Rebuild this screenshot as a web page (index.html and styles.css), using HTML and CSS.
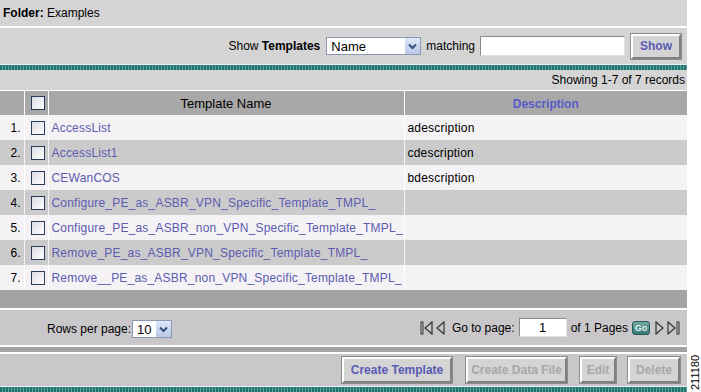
FILE: index.html
```html
<!doctype html>
<html lang="en">
<head>
<meta charset="utf-8">
<title>Templates</title>
<link rel="stylesheet" href="styles.css">
</head>
<body>
<div class="page">

  <!-- folder heading -->
  <div class="folder"><b>Folder:</b> Examples</div>

  <!-- filter -->
  <div class="filter">
    <span>Show <b>Templates</b></span>
    <span class="select name">Name<span class="drop"><svg width="9" height="7" viewBox="0 0 9 7"><path d="M1 1.5 L4.5 5 L8 1.5" fill="none" stroke="#33507a" stroke-width="2"/></svg></span></span>
    <span>matching</span>
    <span class="field match"></span>
    <span class="btn show">Show</span>
  </div>

  <div class="stripe"></div>

  <div class="count">Showing 1-7 of 7 records</div>

  <table class="grid">
    <colgroup>
      <col class="c-num">
      <col class="c-chk">
      <col class="c-name">
      <col>
    </colgroup>
    <tr class="head">
      <th class="num"></th>
      <th class="chk"><span class="cb"></span></th>
      <th class="name">Template Name</th>
      <th class="desc"><a>Description</a></th>
    </tr>
    <tr class="light"><td class="num">1.</td><td class="chk"><span class="cb"></span></td><td><a>AccessList</a></td><td>adescription</td></tr>
    <tr class="dark"><td class="num">2.</td><td class="chk"><span class="cb"></span></td><td><a>AccessList1</a></td><td>cdescription</td></tr>
    <tr class="light"><td class="num">3.</td><td class="chk"><span class="cb"></span></td><td><a>CEWanCOS</a></td><td>bdescription</td></tr>
    <tr class="dark"><td class="num">4.</td><td class="chk"><span class="cb"></span></td><td><a>Configure_PE_as_ASBR_VPN_Specific_Template_TMPL_</a></td><td></td></tr>
    <tr class="light"><td class="num">5.</td><td class="chk"><span class="cb"></span></td><td><a>Configure_PE_as_ASBR_non_VPN_Specific_Template_TMPL_</a></td><td></td></tr>
    <tr class="dark"><td class="num">6.</td><td class="chk"><span class="cb"></span></td><td><a>Remove_PE_as_ASBR_VPN_Specific_Template_TMPL_</a></td><td></td></tr>
    <tr class="light"><td class="num">7.</td><td class="chk"><span class="cb"></span></td><td><a>Remove__PE_as_ASBR_non_VPN_Specific_Template_TMPL_</a></td><td></td></tr>
  </table>

  <div class="tail"></div>

  <!-- paging -->
  <div class="pager">
    <div class="rows">Rows per page:<span class="select small">10<span class="drop"><svg width="9" height="7" viewBox="0 0 9 7"><path d="M1 1.5 L4.5 5 L8 1.5" fill="none" stroke="#33507a" stroke-width="2"/></svg></span></span></div>
    <div class="goto">
      <svg width="26" height="14" viewBox="0 0 26 14">
        <rect x="1" y="1" width="2" height="12" fill="none" stroke="#333" stroke-width="1"/>
        <path d="M12 1 L5 7 L12 13 Z" fill="none" stroke="#333" stroke-width="1.2"/>
        <path d="M24 1 L17 7 L24 13 Z" fill="none" stroke="#333" stroke-width="1.2"/>
      </svg>
      <span>Go to page:</span>
      <span class="field page">1</span>
      <span>of 1 Pages</span>
      <span class="go">Go</span>
      <svg width="28" height="14" viewBox="0 0 28 14">
        <path d="M2 1 L9 7 L2 13 Z" fill="none" stroke="#333" stroke-width="1.2"/>
        <path d="M14 1 L21 7 L14 13 Z" fill="none" stroke="#333" stroke-width="1.2"/>
        <rect x="23" y="1" width="2" height="12" fill="none" stroke="#333" stroke-width="1"/>
      </svg>
    </div>
  </div>

  <div class="sep"></div>

  <!-- buttons -->
  <div class="actions">
    <span class="btn create">Create Template</span>
    <span class="btn off datafile">Create Data File</span>
    <span class="btn off edit">Edit</span>
    <span class="btn off delete">Delete</span>
  </div>

  <div class="stripe"></div>
</div>
<div class="figno">211180</div>
</body>
</html>
```

FILE: styles.css
```css
body {
  margin: 0;
  display: flex;
  font-family: "Liberation Sans", Arial, sans-serif;
  font-size: 12px;
  color: #000;
  background: #fff;
}
.page {
  width: 688px;
}
b {
  font-weight: bold;
}

.folder {
  height: 26px;
  line-height: 27px;
  padding-left: 3px;
  background-color: #d4d4d4;
  margin-bottom: 2px;
}

.filter {
  height: 36px;
  background-color: #d4d4d4;
  display: flex;
  align-items: center;
  justify-content: flex-end;
  gap: 5px;
  padding-right: 6px;
}
.filter .name {
  margin-left: 1px;
}

.select {
  display: inline-flex;
  align-items: center;
  justify-content: space-between;
  height: 18px;
  box-sizing: border-box;
  border: 1px solid #8a99b0;
  background-color: #fff;
  padding-left: 4px;
  font-size: 13px;
}
.select.name {
  width: 95px;
}
.select.small {
  width: 40px;
  margin-left: 1px;
}
.select .drop {
  width: 15px;
  height: 16px;
  display: flex;
  align-items: center;
  justify-content: center;
  background: linear-gradient(#dfe8f8, #b8c8e8);
}

.field {
  display: inline-block;
  height: 20px;
  box-sizing: border-box;
  border: 1px solid #8a8a8a;
  border-right-color: #e0e0e0;
  border-bottom-color: #e0e0e0;
  background-color: #fff;
}
.field.match {
  width: 145px;
}

.btn {
  display: inline-flex;
  align-items: center;
  justify-content: center;
  flex-shrink: 0;
  box-sizing: border-box;
  height: 26px;
  border: 2px solid #fff;
  border-right-color: #808080;
  border-bottom-color: #808080;
  outline: 1px solid #8c8c8c;
  background-color: #d4d4d4;
  color: #5a5ab4;
  font-weight: bold;
}
.btn.show {
  width: 50px;
  height: 25px;
  margin-left: 1px;
}

.stripe {
  height: 5px;
  border-top: 1px solid #e8f0f0;
  background: repeating-linear-gradient(90deg, #1f7470 0 2px, #5fa39f 2px 3px);
}

.count {
  height: 20px;
  line-height: 20px;
  text-align: right;
  padding-right: 2px;
  background-color: #d4d4d4;
}

.grid {
  width: 100%;
  table-layout: fixed;
  border-collapse: collapse;
  border-top: 1px solid #fff;
}
.c-num {
  width: 24px;
}
.c-chk {
  width: 24px;
}
.c-name {
  width: 356px;
}
.grid th,
.grid td {
  height: 25px;
  padding: 0 3px;
  border-left: 1px solid #fff;
  white-space: nowrap;
  overflow: hidden;
}
.grid td {
  letter-spacing: 0.2px;
}
.grid th:first-child,
.grid td:first-child {
  border-left: none;
}
.grid .head th {
  height: 24px;
  background-color: #a8a8a8;
  font-weight: normal;
  font-size: 13px;
}
.grid .head .desc a {
  color: #5a5ac8;
  font-weight: bold;
  font-size: 12px;
}
.grid .num {
  text-align: right;
  padding-right: 3px;
  letter-spacing: 0;
}
.grid .chk {
  padding: 0 0 0 6px;
}
.grid td a {
  color: #5c5cb0;
}
.light td {
  background-color: #f4f2f4;
}
.dark td {
  background-color: #cccbcc;
  border-left-color: #f4f2f4;
}

.cb {
  display: block;
  width: 14px;
  height: 14px;
  box-sizing: border-box;
  border: 1px solid #2a3a5a;
  background: linear-gradient(135deg, #dcdce4, #ffffff);
}

.tail {
  height: 18px;
  background-color: #a3a3a3;
  border-bottom: 2px solid #fff;
}

.pager {
  height: 35px;
  background-color: #c9c7c9;
  display: flex;
  align-items: center;
  justify-content: space-between;
  padding: 0 5px 0 47px;
}
.rows {
  display: flex;
  align-items: center;
  padding-top: 3px;
}
.goto {
  display: flex;
  align-items: center;
  gap: 4px;
}
.goto svg:first-child {
  margin-right: 2px;
}
.field.page {
  width: 48px;
  height: 19px;
  text-align: center;
  line-height: 17px;
  font-size: 13px;
}
.go {
  width: 18px;
  height: 14px;
  box-sizing: border-box;
  border: 1px solid #2a5a58;
  border-radius: 3px;
  background: linear-gradient(#6fa8a4, #3a7a76);
  color: #dff0ee;
  font-size: 9px;
  font-weight: bold;
  text-align: center;
  line-height: 12px;
}

.sep {
  height: 5px;
  border-top: 2px solid #fff;
  border-bottom: 2px solid #fff;
  background-color: #a3a3a3;
}

.actions {
  height: 32px;
  background-color: #c9c7c9;
  display: flex;
  align-items: center;
  justify-content: flex-end;
  padding-right: 7px;
}
.btn.create {
  width: 110px;
}
.btn.off {
  color: #a8a8a8;
}
.btn.datafile {
  width: 101px;
  margin-left: 14px;
}
.btn.edit {
  width: 36px;
  margin-left: 13px;
}
.btn.delete {
  width: 52px;
  margin-left: 12px;
}

.figno {
  writing-mode: vertical-rl;
  transform: rotate(180deg);
  align-self: flex-end;
  margin: 0 0 2px 2px;
  font-size: 11px;
  height: 40px;
}
```
